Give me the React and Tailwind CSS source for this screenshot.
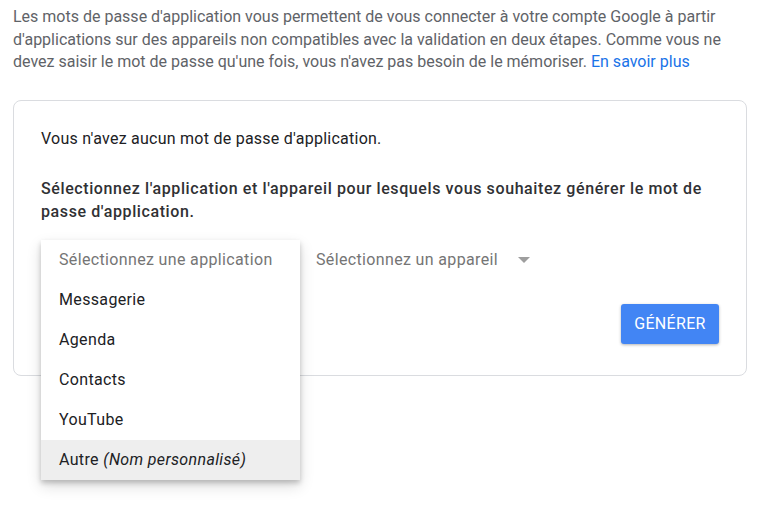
export default function App() {
  const items = ["Messagerie", "Agenda", "Contacts", "YouTube"];
  return (
    <div className="min-h-screen bg-white pl-[13px] pr-[15px] pt-[6px]" style={{ fontFamily: "Roboto, 'Liberation Sans', sans-serif" }}>
      <p className="text-[16px] leading-[22.5px] text-[#5f6368]">
        Les mots de passe d'application vous permettent de vous connecter à votre compte Google à partir
        d'applications sur des appareils non compatibles avec la validation en deux étapes. Comme vous ne
        devez saisir le mot de passe qu'une fois, vous n'avez pas besoin de le mémoriser.{" "}
        <a href="#" className="text-[#1a73e8]">En savoir plus</a>
      </p>

      <div className="mt-[26px] rounded-lg border border-[#dadce0] px-[27px] pt-[27px] pb-[31px] tracking-[0.25px]">
        <p className="text-[16px] leading-[22px] text-[#202124]">Vous n'avez aucun mot de passe d'application.</p>
        <p className="mt-[27px] text-[16px] font-medium leading-[23px] tracking-[0.6px] text-[#303134]">
          Sélectionnez l'application et l'appareil pour lesquels vous souhaitez générer le mot de passe d'application.
        </p>

        <div className="relative mt-[17px] flex h-10 items-center tracking-[0.35px]">
          <div className="flex w-[259px] items-center pl-[18px] text-[16px] text-[#757575]">Sélectionnez une application</div>
          <div className="ml-4 flex items-center gap-[20px] text-[16px] text-[#757575]">
            <span>Sélectionnez un appareil</span>
            <svg width="12" height="6" viewBox="0 0 12 6"><path d="M0 0h12L6 6z" fill="#9e9e9e" /></svg>
          </div>

          <div className="absolute left-0 top-0 z-10 w-[259px] bg-white shadow-[0_3px_5px_rgba(0,0,0,0.2),0_6px_14px_rgba(0,0,0,0.14)]">
            <div className="flex h-10 items-center pl-[18px] text-[16px] text-[#757575]">Sélectionnez une application</div>
            {items.map((it) => (
              <div key={it} className="flex h-10 items-center pl-[18px] text-[16px] text-[#202124]">{it}</div>
            ))}
            <div className="flex h-10 items-center bg-[#eeeeee] pl-[18px] text-[16px] text-[#202124]">
              Autre&nbsp;<i>(Nom personnalisé)</i>
            </div>
          </div>
        </div>

        <div className="mt-6 flex justify-end">
          <button className="h-10 w-[98px] rounded-[3px] bg-[#4285f4] text-[16px] tracking-[0.3px] text-white shadow-[0_1px_3px_rgba(0,0,0,0.3)]">
            GÉNÉRER
          </button>
        </div>
      </div>
    </div>
  );
}
